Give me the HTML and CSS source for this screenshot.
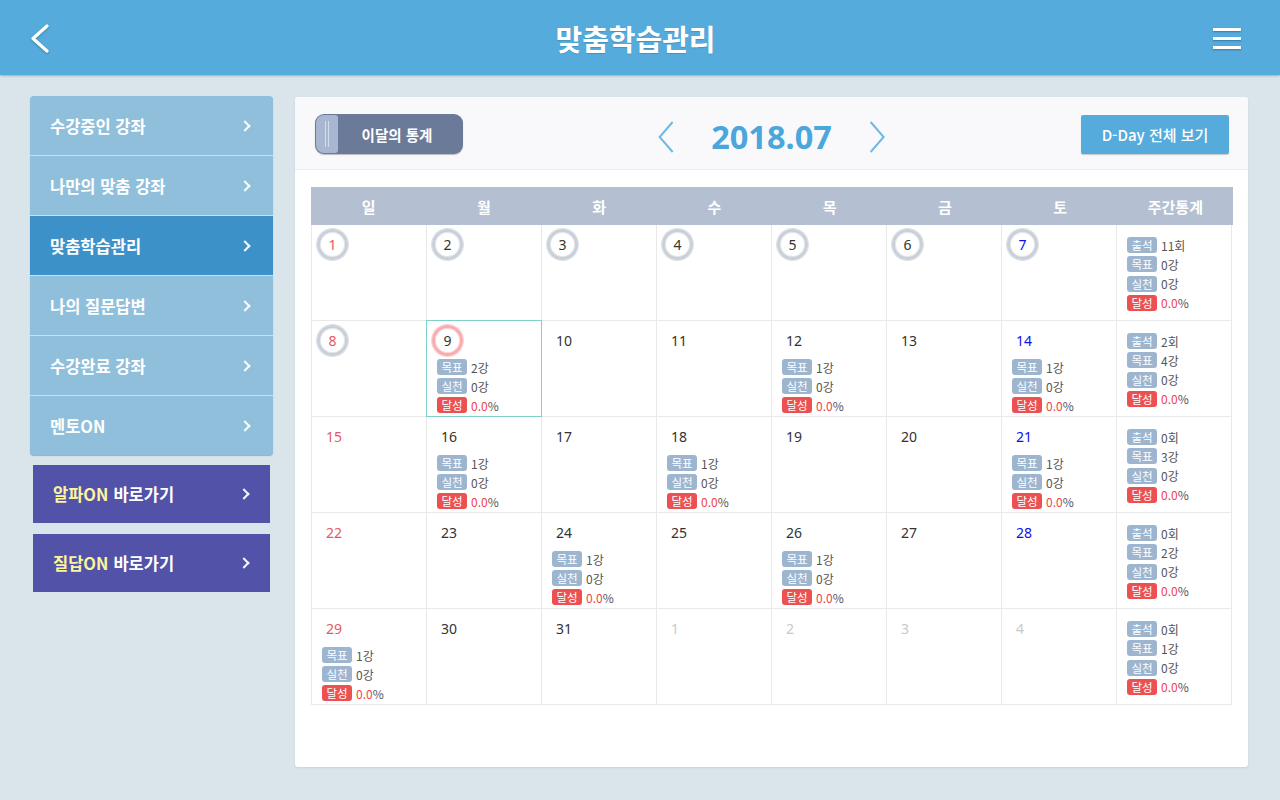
FILE: index.html
```html
<!DOCTYPE html>
<html lang="ko">
<head>
<meta charset="utf-8">
<title>맞춤학습관리</title>
<link rel="stylesheet" href="styles.css">
</head>
<body>
<header class="topbar">
  <a class="back" href="#"><svg width="24" height="32" viewBox="0 0 24 32"><polyline points="19,3 5,15.5 19,28" fill="none" stroke="#fff" stroke-width="3.2" stroke-linecap="round" stroke-linejoin="round"/></svg></a>
  <h1 class="title">맞춤학습관리</h1>
  <a class="menu" href="#"><span></span><span></span><span></span></a>
</header>

<div class="content">
  <aside class="sidebar">
    <nav class="side-menu">
      <a class="side-item" href="#">수강중인 강좌<i class="chev"></i></a>
      <a class="side-item" href="#">나만의 맞춤 강좌<i class="chev"></i></a>
      <a class="side-item active" href="#">맞춤학습관리<i class="chev"></i></a>
      <a class="side-item" href="#">나의 질문답변<i class="chev"></i></a>
      <a class="side-item" href="#">수강완료 강좌<i class="chev"></i></a>
      <a class="side-item" href="#">멘토ON<i class="chev"></i></a>
    </nav>
    <a class="shortcut" href="#"><span class="hl">알파ON</span> 바로가기<i class="chev"></i></a>
    <a class="shortcut" href="#"><span class="hl">질답ON</span> 바로가기<i class="chev"></i></a>
  </aside>

  <main class="panel">
    <div class="toolbar">
      <button class="toggle"><span class="knob"></span><span class="toggle-label">이달의 통계</span></button>
      <div class="month-nav">
        <a class="arrow" href="#"><svg width="18" height="34" viewBox="0 0 18 34"><polyline points="16,2 3,17 16,32" fill="none" stroke="#6fb9e4" stroke-width="2"/></svg></a>
        <span class="month">2018.07</span>
        <a class="arrow" href="#"><svg width="18" height="34" viewBox="0 0 18 34"><polyline points="2,2 15,17 2,32" fill="none" stroke="#6fb9e4" stroke-width="2"/></svg></a>
      </div>
      <button class="dday">D-Day 전체 보기</button>
    </div>

    <div class="calendar">
      <div class="cal-head">
        <div>일</div><div>월</div><div>화</div><div>수</div><div>목</div><div>금</div><div>토</div><div>주간통계</div>
      </div>
      <div class="cal-body">
        <!-- week 1 -->
        <div class="cell"><span class="day ring sun">1</span></div>
        <div class="cell"><span class="day ring">2</span></div>
        <div class="cell"><span class="day ring">3</span></div>
        <div class="cell"><span class="day ring">4</span></div>
        <div class="cell"><span class="day ring">5</span></div>
        <div class="cell"><span class="day ring">6</span></div>
        <div class="cell"><span class="day ring sat">7</span></div>
        <div class="cell week">
          <div class="stat"><b class="tag">출석</b>11회</div>
          <div class="stat"><b class="tag">목표</b>0강</div>
          <div class="stat"><b class="tag">실천</b>0강</div>
          <div class="stat"><b class="tag red">달성</b><em>0.0</em>%</div>
        </div>
        <!-- week 2 -->
        <div class="cell"><span class="day ring sun">8</span></div>
        <div class="cell selected"><span class="day ring today">9</span>
          <div class="stats">
            <div class="stat"><b class="tag">목표</b>2강</div>
            <div class="stat"><b class="tag">실천</b>0강</div>
            <div class="stat"><b class="tag red">달성</b><em>0.0</em>%</div>
          </div>
        </div>
        <div class="cell"><span class="day">10</span></div>
        <div class="cell"><span class="day">11</span></div>
        <div class="cell"><span class="day">12</span>
          <div class="stats">
            <div class="stat"><b class="tag">목표</b>1강</div>
            <div class="stat"><b class="tag">실천</b>0강</div>
            <div class="stat"><b class="tag red">달성</b><em>0.0</em>%</div>
          </div>
        </div>
        <div class="cell"><span class="day">13</span></div>
        <div class="cell"><span class="day sat">14</span>
          <div class="stats">
            <div class="stat"><b class="tag">목표</b>1강</div>
            <div class="stat"><b class="tag">실천</b>0강</div>
            <div class="stat"><b class="tag red">달성</b><em>0.0</em>%</div>
          </div>
        </div>
        <div class="cell week">
          <div class="stat"><b class="tag">출석</b>2회</div>
          <div class="stat"><b class="tag">목표</b>4강</div>
          <div class="stat"><b class="tag">실천</b>0강</div>
          <div class="stat"><b class="tag red">달성</b><em>0.0</em>%</div>
        </div>
        <!-- week 3 -->
        <div class="cell"><span class="day sun">15</span></div>
        <div class="cell"><span class="day">16</span>
          <div class="stats">
            <div class="stat"><b class="tag">목표</b>1강</div>
            <div class="stat"><b class="tag">실천</b>0강</div>
            <div class="stat"><b class="tag red">달성</b><em>0.0</em>%</div>
          </div>
        </div>
        <div class="cell"><span class="day">17</span></div>
        <div class="cell"><span class="day">18</span>
          <div class="stats">
            <div class="stat"><b class="tag">목표</b>1강</div>
            <div class="stat"><b class="tag">실천</b>0강</div>
            <div class="stat"><b class="tag red">달성</b><em>0.0</em>%</div>
          </div>
        </div>
        <div class="cell"><span class="day">19</span></div>
        <div class="cell"><span class="day">20</span></div>
        <div class="cell"><span class="day sat">21</span>
          <div class="stats">
            <div class="stat"><b class="tag">목표</b>1강</div>
            <div class="stat"><b class="tag">실천</b>0강</div>
            <div class="stat"><b class="tag red">달성</b><em>0.0</em>%</div>
          </div>
        </div>
        <div class="cell week">
          <div class="stat"><b class="tag">출석</b>0회</div>
          <div class="stat"><b class="tag">목표</b>3강</div>
          <div class="stat"><b class="tag">실천</b>0강</div>
          <div class="stat"><b class="tag red">달성</b><em>0.0</em>%</div>
        </div>
        <!-- week 4 -->
        <div class="cell"><span class="day sun">22</span></div>
        <div class="cell"><span class="day">23</span></div>
        <div class="cell"><span class="day">24</span>
          <div class="stats">
            <div class="stat"><b class="tag">목표</b>1강</div>
            <div class="stat"><b class="tag">실천</b>0강</div>
            <div class="stat"><b class="tag red">달성</b><em>0.0</em>%</div>
          </div>
        </div>
        <div class="cell"><span class="day">25</span></div>
        <div class="cell"><span class="day">26</span>
          <div class="stats">
            <div class="stat"><b class="tag">목표</b>1강</div>
            <div class="stat"><b class="tag">실천</b>0강</div>
            <div class="stat"><b class="tag red">달성</b><em>0.0</em>%</div>
          </div>
        </div>
        <div class="cell"><span class="day">27</span></div>
        <div class="cell"><span class="day sat">28</span></div>
        <div class="cell week">
          <div class="stat"><b class="tag">출석</b>0회</div>
          <div class="stat"><b class="tag">목표</b>2강</div>
          <div class="stat"><b class="tag">실천</b>0강</div>
          <div class="stat"><b class="tag red">달성</b><em>0.0</em>%</div>
        </div>
        <!-- week 5 -->
        <div class="cell"><span class="day sun">29</span>
          <div class="stats">
            <div class="stat"><b class="tag">목표</b>1강</div>
            <div class="stat"><b class="tag">실천</b>0강</div>
            <div class="stat"><b class="tag red">달성</b><em>0.0</em>%</div>
          </div>
        </div>
        <div class="cell"><span class="day">30</span></div>
        <div class="cell"><span class="day">31</span></div>
        <div class="cell"><span class="day other">1</span></div>
        <div class="cell"><span class="day other">2</span></div>
        <div class="cell"><span class="day other">3</span></div>
        <div class="cell"><span class="day other">4</span></div>
        <div class="cell week">
          <div class="stat"><b class="tag">출석</b>0회</div>
          <div class="stat"><b class="tag">목표</b>1강</div>
          <div class="stat"><b class="tag">실천</b>0강</div>
          <div class="stat"><b class="tag red">달성</b><em>0.0</em>%</div>
        </div>
      </div>
    </div>
  </main>
</div>
</body>
</html>
```

FILE: styles.css
```css
* { box-sizing: border-box; }

html, body {
  margin: 0;
  padding: 0;
}

body {
  width: 1280px;
  height: 800px;
  background: #d9e4eb;
  font-family: "Noto Sans CJK KR", "Noto Sans", sans-serif;
  color: #333;
  overflow: hidden;
}

a { text-decoration: none; color: inherit; }

button {
  font-family: inherit;
  border: 0;
  cursor: pointer;
}

/* ---------- top bar ---------- */
.topbar {
  height: 75px;
  background: #55acdc;
  box-shadow: 0 1px 2px rgba(0, 0, 0, 0.25);
  display: flex;
  align-items: center;
  justify-content: space-between;
  padding: 0 39px 0 28px;
  position: relative;
  z-index: 1;
}

.back {
  display: flex;
  width: 24px;
  height: 32px;
  margin-top: 2px;
  filter: drop-shadow(0 1px 1px rgba(0, 0, 0, 0.25));
}

.title {
  margin: 0;
  font-size: 29px;
  font-weight: 700;
  color: #fff;
  letter-spacing: 0;
  text-shadow: 0 1px 1px rgba(0, 0, 0, 0.15);
  margin-left: 6px;
}

.menu {
  width: 28px;
  display: flex;
  flex-direction: column;
  gap: 6px;
  margin-top: 2px;
}

.menu span {
  display: block;
  height: 3px;
  background: #fff;
  box-shadow: 0 1px 2px rgba(0, 60, 110, 0.45);
}

/* ---------- layout ---------- */
.content {
  display: flex;
  gap: 22px;
  padding: 21px 0 0 30px;
}

/* ---------- sidebar ---------- */
.sidebar {
  width: 243px;
  display: flex;
  flex-direction: column;
}

.side-menu {
  display: flex;
  flex-direction: column;
  background: #8fbfdb;
  border-radius: 4px;
  overflow: hidden;
  box-shadow: 0 1px 1px rgba(60, 110, 150, 0.45);
}

.side-item {
  height: 60px;
  padding: 0 22px 0 20px;
  display: flex;
  align-items: center;
  justify-content: space-between;
  font-size: 16.5px;
  font-weight: 700;
  color: #fff;
  border-top: 1px solid #c8e1f0;
}

.side-item:first-child {
  height: 59px;
  border-top: 0;
}

.side-item.active {
  background: #3c91c8;
}

.chev {
  width: 8px;
  height: 8px;
  border-right: 2px solid #fff;
  border-top: 2px solid #fff;
  transform: rotate(45deg);
  margin-right: 2px;
  opacity: 0.95;
}

.shortcut {
  height: 58px;
  margin: 10px 3px 0 3px;
  background: #5152a8;
  display: flex;
  align-items: center;
  padding: 0 20px 0 20px;
  font-size: 16.5px;
  font-weight: 700;
  color: #fff;
}

.shortcut + .shortcut {
  margin-top: 11px;
}

.shortcut .hl {
  color: #fdf59b;
  margin-right: 5px;
}

.shortcut .chev {
  margin-left: auto;
}

/* ---------- panel ---------- */
.panel {
  width: 953px;
  height: 670px;
  margin-top: 1px;
  background: #fff;
  border-radius: 3px;
  box-shadow: 0 1px 2px rgba(0, 0, 0, 0.08);
  overflow: hidden;
}

.toolbar {
  height: 73px;
  background: #f9f9fb;
  border-bottom: 1px solid #e9ecf0;
  display: flex;
  align-items: center;
  justify-content: space-between;
  padding: 2px 19px 0 20px;
  position: relative;
}

.toggle {
  width: 148px;
  height: 40px;
  background: #6a7a98;
  border-radius: 9px;
  box-shadow: 0 1px 1px rgba(0, 0, 0, 0.25);
  display: flex;
  align-items: center;
  padding: 1px;
}

.knob {
  width: 22px;
  height: 38px;
  border-radius: 8px 3px 3px 8px;
  background: #a8b6cf;
  position: relative;
}

.knob::before,
.knob::after {
  content: "";
  position: absolute;
  top: 6px;
  bottom: 6px;
  width: 1px;
  background: #d4dcea;
}

.knob::before { left: 9px; }
.knob::after { left: 12px; }

.toggle-label {
  flex: 1;
  text-align: center;
  color: #fff;
  font-size: 14.5px;
  font-weight: 700;
  padding-right: 6px;
}

.month-nav {
  position: absolute;
  left: 50%;
  top: 17px;
  transform: translateX(-50%);
  display: flex;
  align-items: center;
  gap: 37px;
}

.arrow {
  display: flex;
}

.month {
  font-family: "Noto Sans", "Open Sans", sans-serif;
  font-size: 32.5px;
  font-weight: 700;
  color: #4ba7db;
  letter-spacing: 0;
}

.dday {
  width: 148px;
  height: 39px;
  background: #55acdc;
  color: #fff;
  font-size: 15px;
  font-weight: 500;
  border-radius: 2px;
  box-shadow: 0 1px 1px rgba(0, 0, 0, 0.2);
}

/* ---------- calendar ---------- */
.calendar {
  margin: 17px 0 0 16px;
  width: 922px;
}

.cal-head {
  display: grid;
  grid-template-columns: repeat(8, 115.25px);
  height: 38px;
  background: #b4c0d1;
}

.cal-head div {
  display: flex;
  align-items: center;
  justify-content: center;
  color: #fff;
  font-size: 15px;
  font-weight: 700;
}

.cal-body {
  display: grid;
  grid-template-columns: repeat(8, 115px);
  grid-auto-rows: 96px;
  border-left: 1px solid #e9e9e9;
  width: 921px;
}

.cell {
  border-right: 1px solid #e9e9e9;
  border-bottom: 1px solid #e9e9e9;
  padding: 4px 0 0 5px;
  position: relative;
}

.cell.selected::after {
  content: "";
  position: absolute;
  top: -1px;
  left: -1px;
  right: -1px;
  bottom: -1px;
  border: 1px solid #7fd0c8;
  pointer-events: none;
}

.day {
  display: inline-block;
  height: 31px;
  line-height: 31px;
  padding-left: 9px;
  font-size: 14px;
  color: #333;
  font-family: "Noto Sans", "Open Sans", sans-serif;
}

.day.ring {
  width: 31px;
  padding-left: 0;
  text-align: center;
  border-radius: 50%;
  border: 3px solid #c9d0d8;
  box-shadow: inset 0 0 0 1px #e3e7ec, 0 0 0 1px #dde2e8;
  line-height: 25px;
}

.day.ring.today {
  border-color: #f6aeb0;
  box-shadow: inset 0 0 0 1px #fbd9da, 0 0 0 1px #fbd4d5;
}

.day.sun { color: #e65963; }
.day.sat { color: #1010ee; }
.day.other { color: #c9c9c9; }

.stats {
  margin: 3px 0 0 5px;
  display: flex;
  flex-direction: column;
  gap: 3px;
}

.week {
  padding: 12px 0 0 10px;
  display: flex;
  flex-direction: column;
  gap: 3.3px;
}

.stat {
  display: flex;
  align-items: center;
  height: 16px;
  font-size: 12px;
  color: #555;
  white-space: nowrap;
}

.tag {
  display: inline-flex;
  align-items: center;
  justify-content: center;
  width: 30px;
  height: 16px;
  margin-right: 4px;
  border-radius: 3px;
  background: #9db5cf;
  color: #fff;
  font-size: 11.5px;
  font-weight: 400;
}

.tag.red {
  background: #ec5050;
}

.stat em {
  font-style: normal;
  color: #f0454b;
}
```
